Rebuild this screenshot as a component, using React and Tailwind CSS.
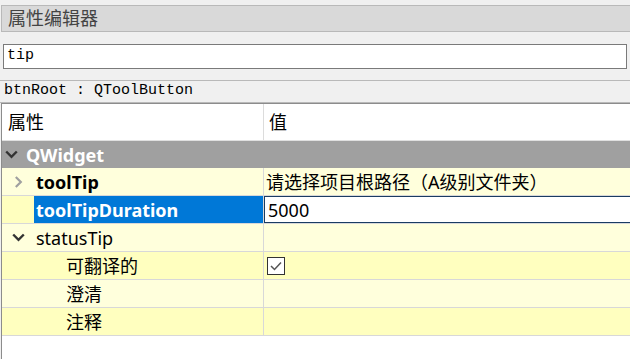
import React from 'react';

const font = { fontFamily: '"Noto Sans", "Noto Sans CJK SC", sans-serif' };

const ChevronDown = ({ className = '' }) => (
    <svg width="13" height="9" viewBox="0 0 13 9" className={className}>
        <path d="M1.2 1.5 L6.5 6.8 L11.8 1.5" fill="none" stroke="currentColor" strokeWidth="2.4" />
    </svg>
);

const ChevronRight = ({ className = '' }) => (
    <svg width="9" height="12" viewBox="0 0 9 12" className={className}>
        <path d="M1.8 1 L6.8 6 L1.8 11" fill="none" stroke="currentColor" strokeWidth="2.2" />
    </svg>
);

const Row = ({ bg, indent, icon, label, bold, selected, value }) => (
    <div className={`flex h-[28px] border-b border-[#d8d8d8] ${bg}`}>
        <div className="w-[261px] flex items-center shrink-0">
            <div className="w-[32px] h-full flex items-center justify-center shrink-0">{icon}</div>
            <div
                className={`h-full flex items-center pt-[1px] pr-2 ${indent} ${selected ? 'bg-[#0078d7] text-white flex-1' : 'text-black'} ${bold ? 'font-bold' : ''} text-[18px]`}
            >
                {label}
            </div>
        </div>
        <div className="w-px bg-[#d8d8d8]" />
        <div className="flex-1 flex items-center overflow-hidden">{value}</div>
    </div>
);

export default function App() {
    return (
        <div className="w-[630px] h-[359px] bg-[#f0f0f0] overflow-hidden flex flex-col" style={font}>
            {/* title */}
            <div className="mt-[5px] ml-[1px] h-[27px] bg-[#d9d9d9] border-y border-l border-[#b9b9b9] flex items-center pl-[6px] text-[18px] text-[#444]">
                属性编辑器
            </div>

            {/* filter */}
            <div className="mt-[12px] mx-[3px] h-[25px] bg-white border border-[#7a7a7a] flex items-center pl-[3px] text-[15px] text-black font-['Liberation_Mono',monospace]">
                tip
            </div>

            {/* object name */}
            <div className="mt-[11px] h-[23px] border-t border-b border-[#b9b9b9] flex items-center pl-[4px] text-[15px] text-black font-['Liberation_Mono',monospace]">
                btnRoot : QToolButton
            </div>

            {/* tree */}
            <div className="flex-1 ml-[1px] border-l border-t border-[#8c8c8c] bg-white flex flex-col">
                <div className="flex h-[37px] border-b border-[#e0e0e0] bg-white">
                    <div className="w-[261px] flex items-center pt-[1px] pl-[6px] text-[18px] text-black">属性</div>
                    <div className="w-px bg-[#dcdcdc]" />
                    <div className="flex-1 flex items-center pt-[1px] pl-[5px] text-[18px] text-black">值</div>
                </div>

                <div className="flex items-center h-[27px] bg-[#a0a0a0] text-white font-bold text-[18px]">
                    <div className="pl-[3px] pr-[8px] flex items-center text-[#333]">
                        <ChevronDown />
                    </div>
                    <span className="pt-[1px]">QWidget</span>
                </div>

                <Row
                    bg="bg-[#ffffdc]"
                    icon={<ChevronRight className="text-[#a0a0a0]" />}
                    indent="pl-[2px]"
                    label="toolTip"
                    bold
                    value={<span className="pl-[2px] pt-[1px] text-[18px] text-black whitespace-nowrap">请选择项目根路径（A级别文件夹）</span>}
                />
                <Row
                    bg="bg-[#ffffbf]"
                    indent="pl-[2px]"
                    label="toolTipDuration"
                    bold
                    selected
                    value={
                        <div className="w-[372px] shrink-0 h-full bg-white border border-[#1a3c62] flex items-center pt-[1px] pl-[3px] text-[18px] text-black">
                            5000
                        </div>
                    }
                />
                <Row
                    bg="bg-[#ffffdc]"
                    icon={<ChevronDown className="text-[#333]" />}
                    indent="pl-[2px]"
                    label="statusTip"
                />
                <Row
                    bg="bg-[#ffffbf]"
                    indent="pl-[32px]"
                    label="可翻译的"
                    value={
                        <div className="ml-[3px] w-[18px] h-[18px] border border-[#333] bg-white flex items-center justify-center">
                            <svg width="12" height="10" viewBox="0 0 12 10">
                                <path d="M1 5 L4.5 8.5 L11 1.5" fill="none" stroke="#555" strokeWidth="1.5" />
                            </svg>
                        </div>
                    }
                />
                <Row bg="bg-[#ffffdc]" indent="pl-[32px]" label="澄清" />
                <Row bg="bg-[#ffffbf]" indent="pl-[32px]" label="注释" />
            </div>
        </div>
    );
}
